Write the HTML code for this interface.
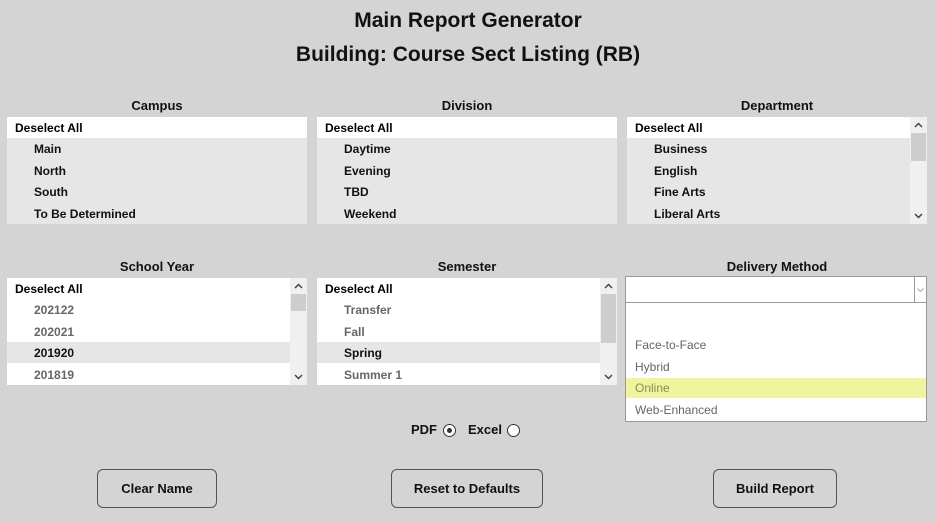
<!DOCTYPE html><html><head><style>
body{margin:0;width:936px;height:522px;background:#d4d4d4;font-family:"Liberation Sans",sans-serif;position:relative;overflow:hidden}
.a{position:absolute}
.t{text-align:center;font-weight:bold;color:#111}
.box{position:absolute;background:#e6e6e6;width:300px;height:107px;overflow:hidden}
.r{position:absolute;left:0;height:21px;line-height:22px;font-size:12px;font-weight:bold;width:100%}
.d{background:#fff;padding-left:8px;color:#000}
.i{padding-left:27px;color:#111}
.g{color:#6a6462}
.sb{position:absolute;right:0;top:0;width:17px;height:100%;background:#f0f0f0}
.th{position:absolute;left:1px;width:15px;background:#cdcdcd}
.ar{position:absolute;left:4px;width:9px;height:6px}
.btn{position:absolute;height:37px;border:1px solid #555;border-radius:6px;background:#d4d4d4;font-size:13px;font-weight:bold;text-align:center;line-height:37px;color:#111}
</style></head><body>
<div class="a t" style="left:0;width:936px;top:9px;font-size:21px">Main Report Generator</div>
<div class="a t" style="left:0;width:936px;top:43px;font-size:21px">Building: Course Sect Listing (RB)</div>

<div class="a t" style="left:7px;width:300px;top:98px;font-size:13px">Campus</div>
<div class="a t" style="left:317px;width:300px;top:98px;font-size:13px">Division</div>
<div class="a t" style="left:627px;width:300px;top:98px;font-size:13px">Department</div>

<div class="box" style="left:7px;top:117px">
<div class="r d" style="top:0">Deselect All</div>
<div class="r i" style="top:21px">Main</div><div class="r i" style="top:43px">North</div><div class="r i" style="top:64px">South</div><div class="r i" style="top:86px">To Be Determined</div></div>
<div class="box" style="left:317px;top:117px">
<div class="r d" style="top:0">Deselect All</div>
<div class="r i" style="top:21px">Daytime</div><div class="r i" style="top:43px">Evening</div><div class="r i" style="top:64px">TBD</div><div class="r i" style="top:86px">Weekend</div></div>
<div class="box" style="left:627px;top:117px">
<div class="r d" style="top:0">Deselect All</div>
<div class="r i" style="top:21px">Business</div><div class="r i" style="top:43px">English</div><div class="r i" style="top:64px">Fine Arts</div><div class="r i" style="top:86px">Liberal Arts</div>
<div class="sb"><svg class="ar" style="top:5px" viewBox="0 0 9 6"><path d="M1 5L4.5 1.5L8 5" stroke="#444" stroke-width="1.5" fill="none"/></svg><div class="th" style="top:16px;height:28px"></div><svg class="ar" style="bottom:5px" viewBox="0 0 9 6"><path d="M1 1L4.5 4.5L8 1" stroke="#444" stroke-width="1.5" fill="none"/></svg></div></div>

<div class="a t" style="left:7px;width:300px;top:259px;font-size:13px">School Year</div>
<div class="a t" style="left:317px;width:300px;top:259px;font-size:13px">Semester</div>
<div class="a t" style="left:627px;width:300px;top:259px;font-size:13px">Delivery Method</div>

<div class="box" style="left:7px;top:278px;background:#fff">
<div class="r d" style="top:0">Deselect All</div>
<div class="r i g" style="top:21px">202122</div><div class="r i g" style="top:43px">202021</div><div class="r i" style="top:64px;background:#e6e6e6">201920</div><div class="r i g" style="top:86px">201819</div>
<div class="sb"><svg class="ar" style="top:5px" viewBox="0 0 9 6"><path d="M1 5L4.5 1.5L8 5" stroke="#444" stroke-width="1.5" fill="none"/></svg><div class="th" style="top:16px;height:17px"></div><svg class="ar" style="bottom:5px" viewBox="0 0 9 6"><path d="M1 1L4.5 4.5L8 1" stroke="#444" stroke-width="1.5" fill="none"/></svg></div></div>
<div class="box" style="left:317px;top:278px;background:#fff">
<div class="r d" style="top:0">Deselect All</div>
<div class="r i g" style="top:21px">Transfer</div><div class="r i g" style="top:43px">Fall</div><div class="r i" style="top:64px;background:#e6e6e6">Spring</div><div class="r i g" style="top:86px">Summer 1</div>
<div class="sb"><svg class="ar" style="top:5px" viewBox="0 0 9 6"><path d="M1 5L4.5 1.5L8 5" stroke="#444" stroke-width="1.5" fill="none"/></svg><div class="th" style="top:16px;height:49px"></div><svg class="ar" style="bottom:5px" viewBox="0 0 9 6"><path d="M1 1L4.5 4.5L8 1" stroke="#444" stroke-width="1.5" fill="none"/></svg></div></div>

<div class="a" style="left:625px;top:276px;width:300px;height:144px;border:1px solid #999;background:#fff">
<div class="a" style="left:0;top:0;width:300px;height:25px;border-bottom:1px solid #999"></div>
<div class="a" style="left:288px;top:0;width:1px;height:25px;background:#999"></div>
<svg class="a" style="left:291px;top:11px;width:7px;height:4px" viewBox="0 0 7 4"><path d="M0.5 0.5L3.5 3.5L6.5 0.5" stroke="#aaa" fill="none"/></svg>
<div class="a" style="left:9px;top:61px;font-size:12px;color:#6a6462">Face-to-Face</div>
<div class="a" style="left:9px;top:83px;font-size:12px;color:#6a6462">Hybrid</div>
<div class="a" style="left:0;top:101px;width:300px;height:20px;background:#eff59f"></div>
<div class="a" style="left:9px;top:104px;font-size:12px;color:#8a8a50">Online</div>
<div class="a" style="left:9px;top:126px;font-size:12px;color:#6a6462">Web-Enhanced</div>
</div>

<div class="a" style="left:411px;top:422px;font-size:13px;font-weight:bold;color:#111">PDF</div>
<div class="a" style="left:443px;top:424px;width:11px;height:11px;border:1px solid #333;border-radius:50%;background:#fff"><div class="a" style="left:3px;top:3px;width:5px;height:5px;border-radius:50%;background:#333"></div></div>
<div class="a" style="left:468px;top:422px;font-size:13px;font-weight:bold;color:#111">Excel</div>
<div class="a" style="left:507px;top:424px;width:11px;height:11px;border:1px solid #333;border-radius:50%;background:#fff"></div>

<div class="btn" style="left:97px;top:469px;width:118px">Clear Name</div>
<div class="btn" style="left:391px;top:469px;width:150px">Reset to Defaults</div>
<div class="btn" style="left:713px;top:469px;width:122px">Build Report</div>
</body></html>
